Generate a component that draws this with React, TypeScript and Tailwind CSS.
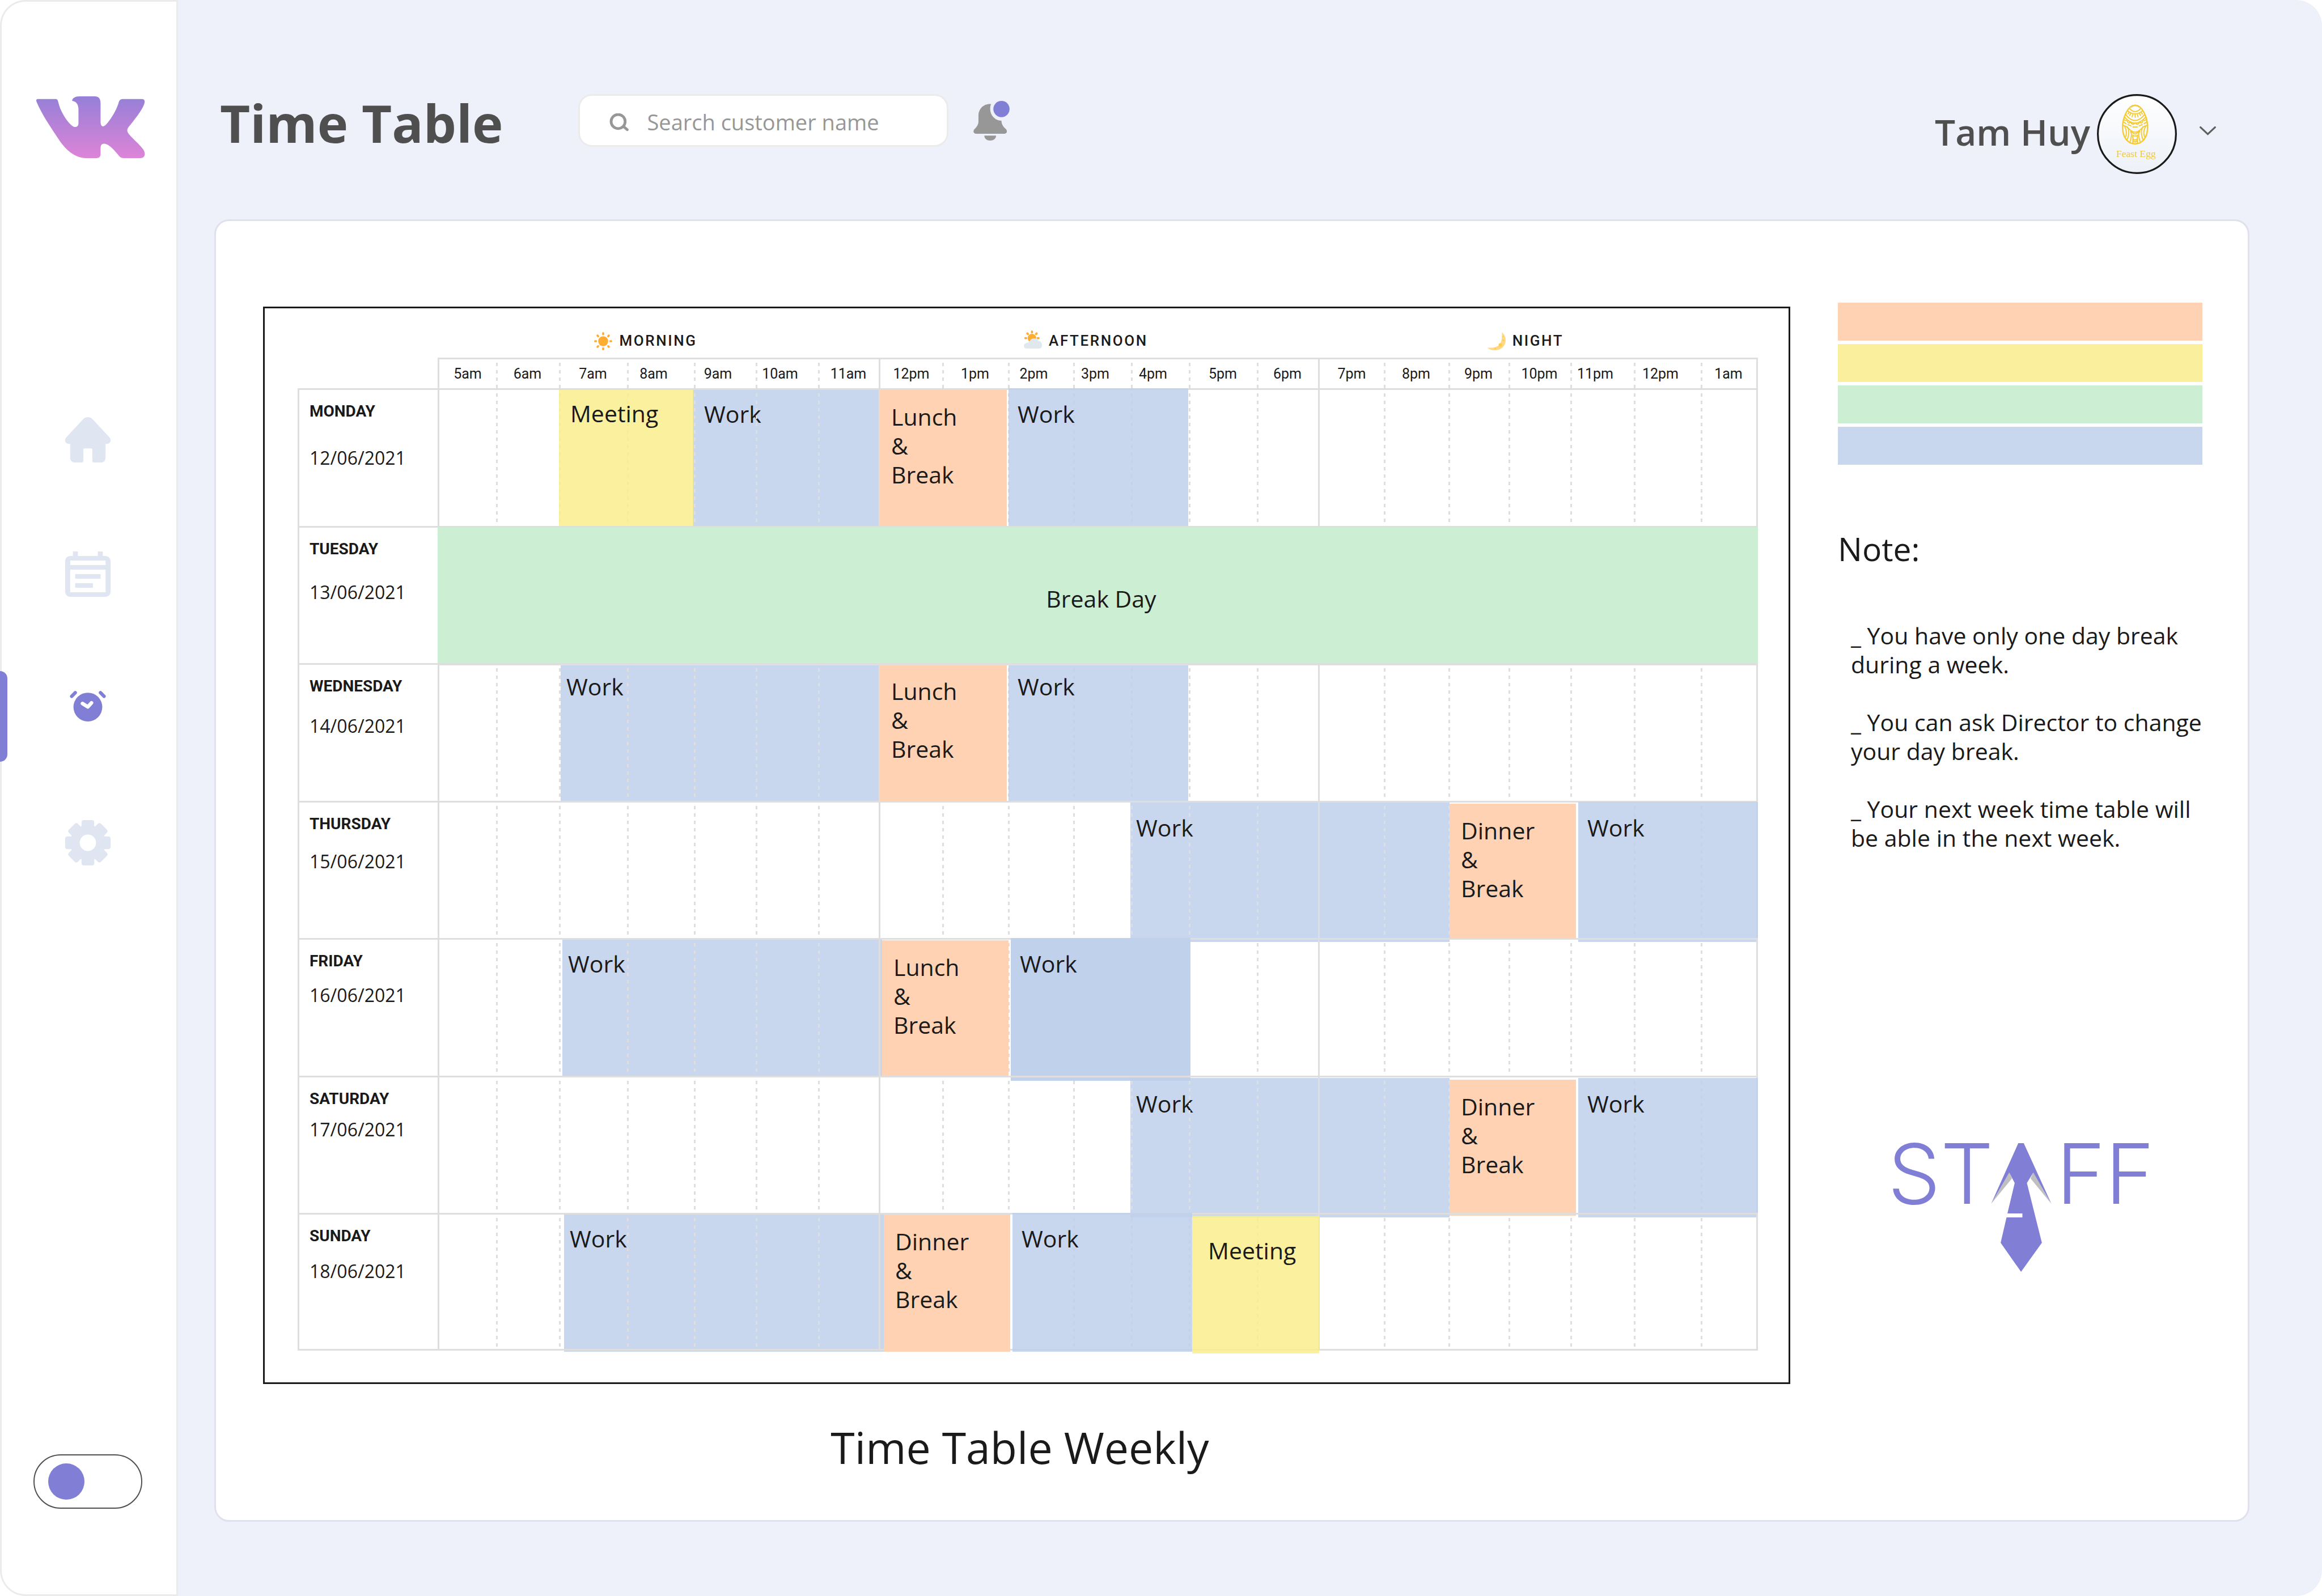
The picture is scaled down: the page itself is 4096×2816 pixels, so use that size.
import React from "react";

type Kind = "meeting" | "work" | "workDeep" | "meal" | "off";

interface Shift {
  kind: Kind;
  lines: string[];
  from: number;
  to: number;
  top: number;
  height: number;
  pad: string;
  under?: boolean;
}

interface Day {
  name: string;
  date: string;
  dateGap: string;
  shifts: Shift[];
}

const LABEL_WIDTH = 247;
const HOURS: { label: string; width: number; edge?: boolean; tight?: boolean }[] = [
  { label: "5am", width: 103, edge: true },
  { label: "6am", width: 111 },
  { label: "7am", width: 120 },
  { label: "8am", width: 118, tight: true },
  { label: "9am", width: 109, tight: true },
  { label: "10am", width: 110, tight: true },
  { label: "11am", width: 107 },
  { label: "12pm", width: 112, edge: true },
  { label: "1pm", width: 116 },
  { label: "2pm", width: 115, tight: true },
  { label: "3pm", width: 102, tight: true },
  { label: "4pm", width: 102, tight: true },
  { label: "5pm", width: 120 },
  { label: "6pm", width: 108 },
  { label: "7pm", width: 116, edge: true },
  { label: "8pm", width: 114 },
  { label: "9pm", width: 106 },
  { label: "10pm", width: 109 },
  { label: "11pm", width: 112, tight: true },
  { label: "12pm", width: 118, tight: true },
  { label: "1am", width: 101 },
];
const TOTAL = HOURS.reduce((sum, h) => sum + h.width, LABEL_WIDTH);

const pct = (n: number) => `${(n / TOTAL) * 100}%`;

const COLORS: Record<Kind, string> = {
  meeting: "bg-[#f9ed8c]/85",
  work: "bg-[#bfd0eb]/85",
  workDeep: "bg-[#c0d1ec]",
  meal: "bg-[#ffd2b3]",
  off: "bg-[#ccefd4]",
};

const LUNCH = ["Lunch", "&", "Break"];
const DINNER = ["Dinner", "&", "Break"];

const DAYS: Day[] = [
  {
    name: "MONDAY",
    date: "12/06/2021",
    dateGap: "mt-11",
    shifts: [
      { kind: "meeting", lines: ["Meeting"], from: 461, to: 698, top: 3, height: 243, pad: "pl-5 pt-4" },
      { kind: "work", lines: ["Work"], from: 697, to: 1027, top: 0, height: 246, pad: "pl-5 pt-5", under: true },
      { kind: "meal", lines: LUNCH, from: 1027, to: 1251, top: 3, height: 240, pad: "pl-5 pt-5.5" },
      { kind: "work", lines: ["Work"], from: 1254, to: 1571, top: 0, height: 246, pad: "pl-4 pt-5" },
    ],
  },
  {
    name: "TUESDAY",
    date: "13/06/2021",
    dateGap: "mt-9.5",
    shifts: [{ kind: "off", lines: ["Break Day"], from: 247, to: 2576, top: 2, height: 244, pad: "pl-3 pt-2" }],
  },
  {
    name: "WEDNESDAY",
    date: "14/06/2021",
    dateGap: "mt-8",
    shifts: [
      { kind: "work", lines: ["Work"], from: 464, to: 1027, top: 4, height: 242, pad: "pl-2.5 pt-3", under: true },
      { kind: "meal", lines: LUNCH, from: 1027, to: 1251, top: 4, height: 239, pad: "pl-5 pt-5" },
      { kind: "work", lines: ["Work"], from: 1254, to: 1571, top: 4, height: 242, pad: "pl-4 pt-3" },
    ],
  },
  {
    name: "THURSDAY",
    date: "15/06/2021",
    dateGap: "mt-7",
    shifts: [
      { kind: "work", lines: ["Work"], from: 1469, to: 2032, top: 2, height: 247, pad: "pl-2.5 pt-5", under: true },
      { kind: "meal", lines: DINNER, from: 2032, to: 2255, top: 5, height: 239, pad: "pl-5 pt-5.5" },
      { kind: "work", lines: ["Work"], from: 2259, to: 2576, top: 2, height: 247, pad: "pl-4 pt-5" },
    ],
  },
  {
    name: "FRIDAY",
    date: "16/06/2021",
    dateGap: "mt-5.5",
    shifts: [
      { kind: "work", lines: ["Work"], from: 467, to: 1031, top: 0, height: 246, pad: "pl-2.5 pt-5", under: true },
      { kind: "meal", lines: LUNCH, from: 1031, to: 1254, top: 4, height: 239, pad: "pl-5 pt-5.5" },
      { kind: "workDeep", lines: ["Work"], from: 1258, to: 1575, top: 0, height: 252, pad: "pl-4 pt-5" },
    ],
  },
  {
    name: "SATURDAY",
    date: "17/06/2021",
    dateGap: "mt-4",
    shifts: [
      { kind: "work", lines: ["Work"], from: 1469, to: 2032, top: 4, height: 246, pad: "pl-2.5 pt-5", under: true },
      { kind: "meal", lines: DINNER, from: 2032, to: 2255, top: 7, height: 240, pad: "pl-5 pt-5.5" },
      { kind: "work", lines: ["Work"], from: 2259, to: 2576, top: 4, height: 246, pad: "pl-4 pt-5" },
    ],
  },
  {
    name: "SUNDAY",
    date: "18/06/2021",
    dateGap: "mt-6",
    shifts: [
      { kind: "work", lines: ["Work"], from: 470, to: 1034, top: 0, height: 245, pad: "pl-2.5 pt-5", under: true },
      { kind: "meal", lines: DINNER, from: 1034, to: 1257, top: 3, height: 242, pad: "pl-5 pt-5.5" },
      { kind: "work", lines: ["Work"], from: 1261, to: 1578, top: 0, height: 245, pad: "pl-4 pt-5" },
      { kind: "meeting", lines: ["Meeting"], from: 1578, to: 1802, top: 5, height: 243, pad: "pl-7 pt-9" },
    ],
  },
];

const DASH = "bg-[linear-gradient(#dedede_50%,transparent_50%)] bg-[length:3px_13px] bg-[position:0_6px] bg-repeat-y";
const SOLID = "border-l-3";

function VkLogo() {
  return (
    <svg viewBox="0 0 241 137" className="h-[109px] w-[193px]" aria-hidden="true">
      <defs>
        <linearGradient id="vk" x1="0" y1="0" x2="0" y2="1">
          <stop offset="0" stopColor="#9580d7" />
          <stop offset="1" stopColor="#dd84d8" />
        </linearGradient>
      </defs>
      <path
        fill="url(#vk)"
        d="M4 6H43C47 6 48 8 49 12C53 30 63 48 76 62C80 66 83 68 86 68C91 68 94 66 94 58V27C93 16 88 11 80 10C80 4 87 0 96 0H130C139 0 143 5 143 16V56C143 63 145 67 149 66.500C153 66 156 62 160 57C171 43 180 26 184 11C186 8 188 6 192 6H234C240 6 242 9 240 16C237 26 228 40 206 67C201 73 201 78 206 84C213 93 228 105 237 117C243 125 243 137 231 137H196C190 137 187 136 183 131C176 122 168 113 160 108C152 103 143 103 143 115V128C143 134 140 137 134 137H110C88 137 66 121 48 92C28 62 12 38 1 12C0 9 0 6 4 6Z"
      />
    </svg>
  );
}

function HomeIcon() {
  return (
    <svg viewBox="0 0 100 100" className="size-20" fill="#e0e5f2" aria-hidden="true">
      <path d="M50 0C54 0 57 1 60 4L98 45C103 51 99 59 92 59H89V89C89 96 85 100 78 100H63C61 100 60 99 60 97V72C60 70 59 69 57 69H43C41 69 40 70 40 72V97C40 99 39 100 37 100H22C15 100 11 96 11 89V59H8C1 59 -3 51 2 45L40 4C43 1 46 0 50 0Z" />
    </svg>
  );
}

function CalendarIcon() {
  return (
    <svg viewBox="0 0 100 100" className="size-20" fill="#e0e5f2" aria-hidden="true">
      <path
        fillRule="evenodd"
        d="M17 0H28V10H72V0H83V10H89C95 10 100 15 100 21V89C100 95 95 100 89 100H11C5 100 0 95 0 89V21C0 15 5 10 11 10H17ZM11 20V30H89V20ZM11 40V90H89V40ZM22 50H78V60H22ZM22 70H61V80H22Z"
      />
    </svg>
  );
}

function ClockIcon() {
  return (
    <svg viewBox="0 0 80 68" className="h-[54px] w-16" aria-hidden="true">
      <circle cx="40" cy="36" r="32" fill="#807fd5" />
      <path d="M4 12L12 4M76 12L68 4" stroke="#807fd5" strokeWidth="7.500" strokeLinecap="round" />
      <path d="M28 28L40 35.500L48 26.500" fill="none" stroke="#fff" strokeWidth="8" strokeLinecap="round" strokeLinejoin="round" />
    </svg>
  );
}

function GearIcon() {
  return (
    <svg viewBox="0 0 100 100" className="size-20" fill="#e0e5f2" aria-hidden="true">
      <circle cx="50" cy="50" r="39" />
      {[0, 45, 90, 135].map((a) => (
        <rect key={a} x="36" y="0" width="28" height="100" rx="5" transform={`rotate(${a} 50 50)`} />
      ))}
      <circle cx="50" cy="50" r="18" fill="#fff" />
    </svg>
  );
}

function BellIcon() {
  return (
    <svg viewBox="0 -7 81 88" className="h-[70px] w-[65px]" aria-hidden="true">
      <path
        fill="#979797"
        d="M39 0C37 4 37 8 37 11C37 25 48 37 62 37C62 44 65 49 70 54C73 56 74 59 74 61C74 64 71 66 68 66H6C3 66 0 64 0 61C0 59 1 56 4 54C9 48 11 45 11 37V26C11 11 22 0 36 0ZM24 70H50C50 77 44 81 37 81C30 81 24 77 24 70Z"
      />
      <circle cx="62" cy="11" r="18" fill="#807fd5" />
    </svg>
  );
}

function SearchIcon() {
  return (
    <svg viewBox="0 0 42 40" className="h-8 w-[34px]" fill="none" stroke="#979797" strokeWidth="6" strokeLinecap="round" aria-hidden="true">
      <circle cx="19" cy="18" r="15.500" />
      <path d="M31 29L39 36" />
    </svg>
  );
}

function Avatar() {
  return (
    <svg viewBox="0 0 176 176" className="size-[141px]" aria-hidden="true">
      <defs>
        <linearGradient id="plate" x1="0" y1="0" x2="0" y2="1">
          <stop offset="0" stopColor="#ffffff" />
          <stop offset="1" stopColor="#edf1f7" />
        </linearGradient>
      </defs>
      <circle cx="88" cy="88" r="86" fill="url(#plate)" stroke="#1a1a1a" strokeWidth="4" />
      <g fill="none" stroke="#f5cb31" strokeWidth="2.400" strokeLinecap="round">
        <path strokeWidth="3" d="M84 24.500C100 24.500 111.500 52 111.500 73C111.500 96 100 109.500 84 109.500C68 109.500 56.500 96 56.500 73C56.500 52 68 24.500 84 24.500Z" />
        <path strokeWidth="3" d="M75 28Q84 22 93 28" />
        <path d="M72 32Q84 45 96 32M68 37Q84 50 100 37M63 45Q84 71 105 45M61 51Q84 77 107 51" />
        <path d="M70 41L68 44M74 43L72 47M79 45L77.500 50M84 45V51M89 45L90.500 50M94 43L96 47M98 41L100 44" />
        <path d="M60 56Q65 61 66 56M67 60Q70 67 74 61M75 63Q79 70 83 64M85 64Q89 70 93 63M94 61Q98 67 101 60M102 56Q103 61 108 56" />
        <path d="M59 62L64 65M68 67L75 70M79 72.500H89M93 70L100 67M104 65L109 62" />
        <path d="M57 69C70 70 72 84 84 84C96 84 98 70 111 69M75 82Q84 93 93 82" />
        <path d="M61 71C66 80 66 90 62 96M67 72C73 82 69 96 66 101M107 71C102 80 102 90 106 96M101 72C95 82 99 96 102 101M74 82C79 90 74 100 73 105M94 82C89 90 94 100 95 105M79 90V107M89 90V107M79 92H89M80 99Q84 103 88 99M80 103Q84 107 88 103" />
      </g>
      <text x="86" y="139" textAnchor="middle" fontSize="22" fill="#efca45" fontFamily="'Liberation Serif', serif">
        Feast Egg
      </text>
    </svg>
  );
}

function SunIcon() {
  return (
    <svg viewBox="0 0 40 40" className="size-8" fill="#ffac33" aria-hidden="true">
      <circle cx="20" cy="20" r="11" />
      {[0, 45, 90, 135, 180, 225, 270, 315].map((a) => (
        <rect key={a} x="17.700" y="0" width="4.600" height="6.600" rx="2.300" transform={`rotate(${a} 20 20)`} />
      ))}
    </svg>
  );
}

function CloudSunIcon() {
  return (
    <svg viewBox="0 0 40 40" className="mb-1.5 size-8" aria-hidden="true">
      <g fill="#ffac33">
        <circle cx="18" cy="17" r="9.500" />
        {[-90, -45, 0, 45, 90].map((a) => (
          <rect key={a} x="15.700" y="0" width="4.600" height="6.600" rx="2.300" transform={`rotate(${a} 18 17)`} />
        ))}
      </g>
      <path fill="#e1e8ed" d="M32 23C32 20 28 17.500 23 17.500C18 17.500 14 20 12 25C10 27 7 27 5 28C2 29 0 31 0 34C0 37.500 3 40 7 40H34C38 40 40 37 40 32C40 27 37 23 32 23Z" />
    </svg>
  );
}

function MoonIcon() {
  return (
    <svg viewBox="0 0 40 40" className="size-8" aria-hidden="true">
      <path fill="#ffd983" d="M32 0C37 5 40 11 40 18C40 30 30 40 16 40C9 40 3 38 0 34C14 36 24 32 28 25C32 18 32 8 32 0Z" />
      <g fill="#ffcc4d">
        <circle cx="28" cy="28" r="3.500" />
        <circle cx="35" cy="18" r="2" />
        <circle cx="17" cy="36" r="2" />
        <circle cx="34" cy="10" r="1.500" />
      </g>
    </svg>
  );
}

function Tie() {
  return (
    <svg viewBox="0 0 133 284" className="mr-2 -ml-1 h-[227px] w-[107px] shrink-0" aria-hidden="true">
      <path fill="#bfbfbf" d="M93 65L133 134L87 78ZM40 65L0 134L46 78Z" />
      <path
        fill="#807fd5"
        d="M60 0H72L133 134L93 65L79 88L112 220L66 284L21 220L34 164H69V155H36L52 88L40 65L0 134Z"
      />
    </svg>
  );
}

const NAV = [
  { label: "Home", icon: <HomeIcon /> },
  { label: "Calendar", icon: <CalendarIcon /> },
  { label: "Time table", icon: <ClockIcon />, active: true },
  { label: "Settings", icon: <GearIcon /> },
];

function Sidebar() {
  return (
    <aside className="flex w-[314px] shrink-0 flex-col items-center rounded-l-[45px] border-3 border-[#ebebeb] bg-white pt-[167px] pb-[151px]">
      <a href="#" aria-label="VK" className="pl-1">
        <VkLogo />
      </a>
      <nav className="mt-[457px] w-full">
        <ul className="flex flex-col gap-[157px]">
          {NAV.map((item) => (
            <li key={item.label} className="relative flex h-20 items-center justify-center pr-1">
              {item.active && <span className="absolute -top-[26px] -left-[3px] h-40 w-[13px] rounded-r-[13px] bg-[#807fd5]" />}
              <a href="#" aria-label={item.label} className={item.active ? "pb-2" : ""}>
                {item.icon}
              </a>
            </li>
          ))}
        </ul>
      </nav>
      <input
        type="checkbox"
        role="switch"
        aria-label="Dark mode"
        className="mt-auto mr-1 h-24 w-48 appearance-none rounded-full border-2 border-[#4f4f4f] px-6 py-3.5 before:block before:size-16 before:rounded-full before:bg-[#807fd5] checked:before:ml-20"
      />
    </aside>
  );
}

function Header() {
  return (
    <header className="flex items-start justify-between pt-[166px] pr-[59px] pb-20 pl-2.5">
      <div className="flex h-[93px] items-center">
        <h1 className="pt-2 text-[92px] leading-none font-bold text-[#4f4f4f]">Time Table</h1>
        <label className="ml-[133px] flex h-full w-[653px] items-center gap-8 rounded-[24px] border-3 border-[#ebebeb] bg-white pt-1.5 pl-13">
          <SearchIcon />
          <input
            type="search"
            aria-label="Search customer name"
            placeholder="Search customer name"
            className="min-w-0 flex-1 bg-transparent text-[38px] text-[#4f4f4f] outline-none placeholder:text-[#979797]"
          />
        </label>
        <button type="button" aria-label="Notifications" className="ml-11">
          <BellIcon />
        </button>
      </div>
      <button type="button" className="flex items-center">
        <span className="pb-2 text-[64px] leading-none font-semibold text-[#4f4f4f]">Tam Huy</span>
        <span className="ml-3">
          <Avatar />
        </span>
        <svg viewBox="0 0 36 20" className="mb-3 ml-10 h-4 w-[29px]" fill="none" stroke="#5f5f5f" strokeWidth="4" strokeLinecap="round" aria-hidden="true">
          <path d="M2 2L18 17L34 2" />
        </svg>
      </button>
    </header>
  );
}

function ShiftBlock({ shift }: { shift: Shift }) {
  const off = shift.kind === "off";
  return (
    <div
      className={`absolute text-[41px] leading-[51px] ${COLORS[shift.kind]} ${shift.pad} ${shift.under ? "-z-10" : "z-10"} ${off ? "flex items-center justify-center" : ""}`}
      style={{ left: pct(shift.from), width: pct(shift.to - shift.from), top: shift.top, height: shift.height }}
    >
      {shift.lines.map((line) => (
        <p key={line}>{line}</p>
      ))}
    </div>
  );
}

function Schedule() {
  const groups = [
    { name: "MORNING", icon: <SunIcon /> },
    { name: "AFTERNOON", icon: <CloudSunIcon /> },
    { name: "NIGHT", icon: <MoonIcon /> },
  ];
  return (
    <div className="border-3 border-[#1a1a1a] pt-7 pr-[54px] pb-14 pl-[58px]">
      <table className="w-full table-fixed border-separate border-spacing-0">
        <colgroup>
          <col style={{ width: pct(LABEL_WIDTH) }} />
          {HOURS.map((h, i) => (
            <col key={i} style={{ width: pct(h.width) }} />
          ))}
        </colgroup>
        <thead className="font-['Roboto',sans-serif]">
          <tr className="h-[59px]">
            <td />
            {groups.map((g) => (
              <th key={g.name} colSpan={7} scope="colgroup" className="pr-11 text-[26px] font-medium tracking-widest">
                <span className="flex items-center justify-center gap-3">
                  {g.icon}
                  {g.name}
                </span>
              </th>
            ))}
          </tr>
          <tr className="h-[54px]">
            <td />
            {HOURS.map((h, i) => (
              <th
                key={i}
                scope="col"
                className={`border-t-3 border-[#dedede] text-center text-[25px] font-normal whitespace-nowrap last:border-r-3 ${h.edge ? SOLID : DASH} ${h.tight ? "pr-6" : ""}`}
              >
                {h.label}
              </th>
            ))}
          </tr>
        </thead>
        <tbody>
          {DAYS.map((day) => (
            <tr key={day.name} className="group relative isolate h-[242px] odd:h-[243px]">
              <th scope="row" className="border-t-3 border-l-3 border-[#dedede] pt-5 pl-4.5 text-left align-top group-last:border-b-3">
                <p className="font-['Roboto',sans-serif] text-[28px] leading-9 font-bold">{day.name}</p>
                <p className={`text-[32px] leading-10 font-normal ${day.dateGap}`}>{day.date}</p>
              </th>
              {HOURS.map((h, i) => (
                <td key={i} className={`border-t-3 border-[#dedede] group-last:border-b-3 last:border-r-3 ${h.edge ? SOLID : DASH}`}>
                  {i === 0 && day.shifts.map((s) => <ShiftBlock key={s.from} shift={s} />)}
                </td>
              ))}
            </tr>
          ))}
        </tbody>
      </table>
    </div>
  );
}

function SidePanel() {
  return (
    <aside className="w-[655px] shrink-0">
      <div className="flex w-[643px] flex-col gap-1.5">
        <div className="h-[67px] bg-[#ffd2b3]" />
        <div className="h-[67px] bg-[#faef9d]" />
        <div className="h-[67px] bg-[#ccefd4]" />
        <div className="h-[67px] bg-[#c9d7ee]" />
      </div>
      <h2 className="mt-[116px] text-[57px] leading-16">Note:</h2>
      <div className="mt-24 flex flex-col gap-[51px] pl-[23px] text-[41px] leading-[51px]">
        <p>_ You have only one day break during a week.</p>
        <p>_ You can ask Director to change your day break.</p>
        <p>_ Your next week time table will be able in the next week.</p>
      </div>
      <div className="mt-[513px] ml-[88px] flex items-start font-['Inter',sans-serif] text-[147px] leading-[107px] font-[350] text-[#807fd5]">
        <span>ST</span>
        <Tie />
        <span>FF</span>
      </div>
    </aside>
  );
}

export default function App() {
  return (
    <div className="flex min-h-screen overflow-hidden rounded-[45px] bg-[#eef1fa] font-['Open_Sans',sans-serif] text-[#1a1a1a]">
      <Sidebar />
      <main className="flex min-w-0 flex-1 flex-col pr-32 pb-[131px] pl-16">
        <Header />
        <section className="flex flex-1 items-start gap-[84px] rounded-[26px] border-3 border-[#e0e0ee] bg-white pt-36 pr-[68px] pl-[83px]">
          <figure className="mt-[7px] min-w-0 flex-1">
            <Schedule />
            <figcaption className="mt-14 pr-6 text-center text-[77px] leading-[112px]">Time Table Weekly</figcaption>
          </figure>
          <SidePanel />
        </section>
      </main>
    </div>
  );
}
